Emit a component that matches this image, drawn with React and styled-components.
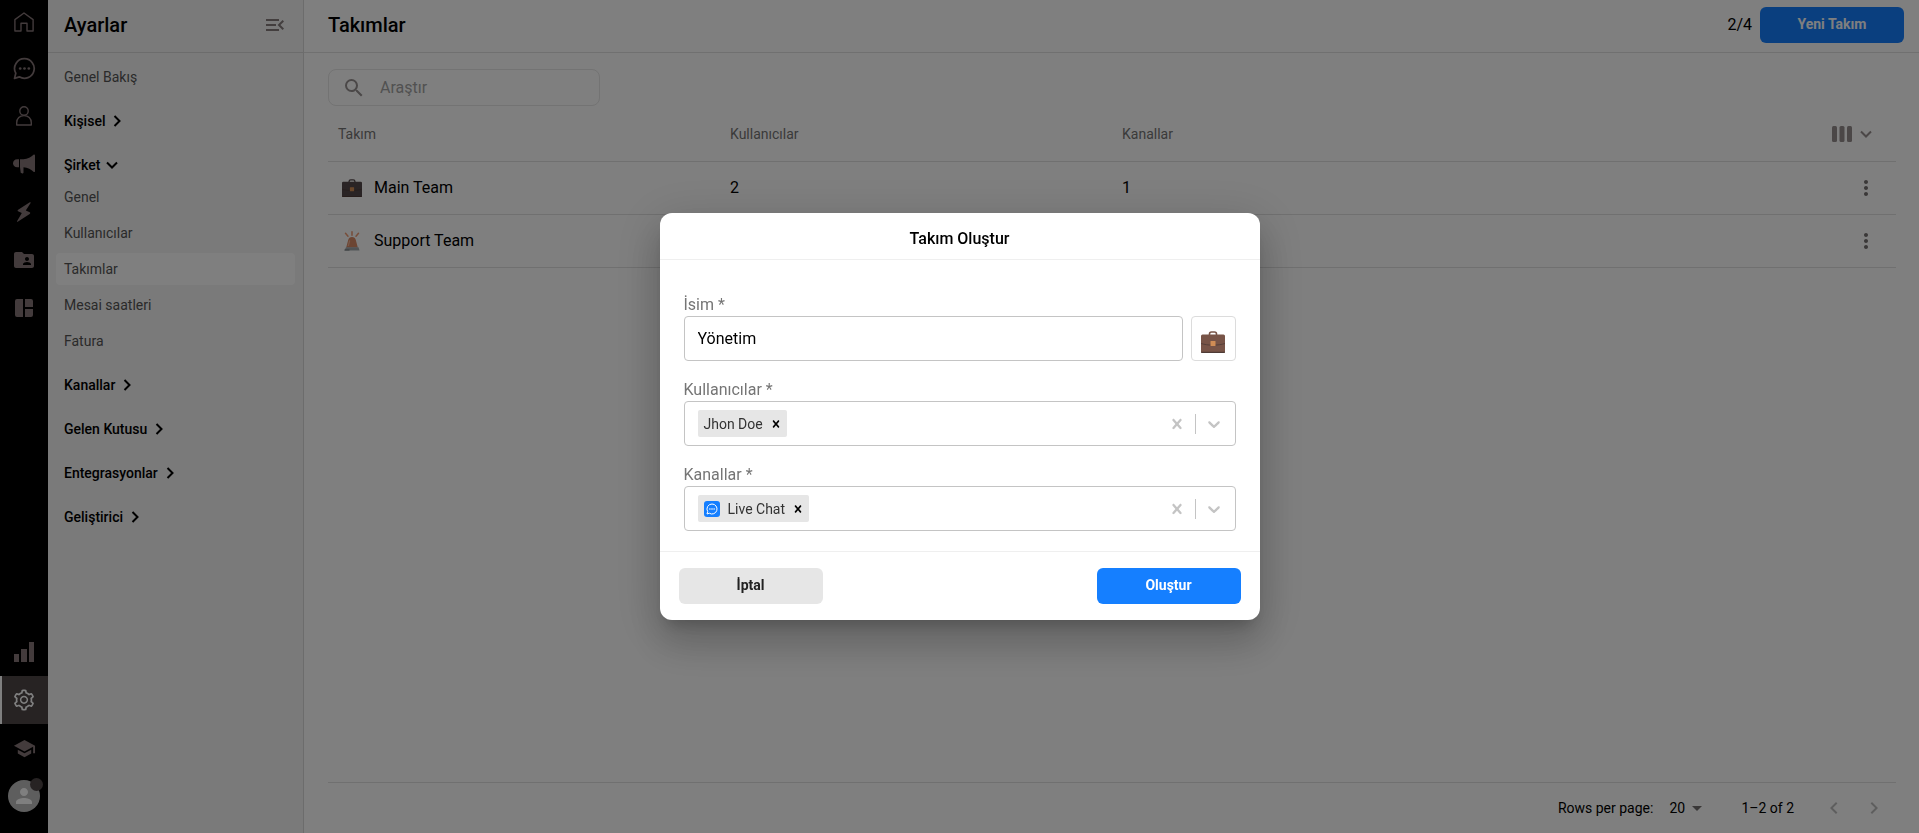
import React from "react";
import styled, { createGlobalStyle } from "styled-components";
import {
  MdFolderShared,
  MdMenuOpen,
  MdSchool,
  MdPerson,
  MdSearch,
  MdMoreVert,
  MdArrowDropDown,
  MdKeyboardArrowLeft,
  MdKeyboardArrowRight,
} from "react-icons/md";
import { AiOutlineSetting } from "react-icons/ai";

const GlobalStyle = createGlobalStyle`
  *, *::before, *::after { box-sizing: border-box; }
  body {
    margin: 0;
    font-family: Roboto, "Liberation Sans", sans-serif;
    font-size: 16px;
    line-height: 24px;
    color: #000;
    background: #fff;
  }
  button, input, select { font: inherit; color: inherit; }
  a { color: inherit; text-decoration: none; }
  svg { display: block; flex: none; }
`;

const Page = styled.div`
  display: flex;
  height: 100vh;
`;

/* Icon rail */
const Rail = styled.nav`
  width: 48px;
  flex: none;
  display: flex;
  flex-direction: column;
  justify-content: space-between;
  padding-bottom: 13px;
  background: #000;
`;

const RailGroup = styled.div`
  display: flex;
  flex-direction: column;
`;

const RailLink = styled.a`
  height: ${(p) => (p.$first ? "44px" : "48px")};
  display: flex;
  align-items: center;
  justify-content: center;
  color: ${(p) => (p.$active ? "#fff" : "#867678")};
  background: ${(p) => (p.$active ? "#4e4647" : "transparent")};
  box-shadow: ${(p) => (p.$active ? "inset 2px 0 0 #fff" : "none")};
`;

const Avatar = styled.span`
  position: relative;
  width: 32px;
  height: 32px;
  border-radius: 50%;
  display: flex;
  align-items: center;
  justify-content: center;
  background: #bdbdbd;
  color: #fff;
`;

const AvatarBadge = styled.span`
  position: absolute;
  top: -2px;
  right: -3px;
  width: 13px;
  height: 13px;
  border-radius: 50%;
  background: #4e4647;
`;

/* Settings menu */
const Sidebar = styled.aside`
  width: 256px;
  flex: none;
  background: #f4f4f4;
  border-right: 1px solid #d9d9d9;
`;

const SidebarHeader = styled.header`
  height: 53px;
  display: flex;
  align-items: center;
  justify-content: space-between;
  padding: 0 16px 2px;
  border-bottom: 1px solid #d9d9d9;
`;

const Title = styled.h1`
  margin: 0;
  font-size: 20px;
  font-weight: 500;
  line-height: 24px;
`;

const PlainButton = styled.button`
  display: flex;
  align-items: center;
  justify-content: center;
  padding: 0;
  border: 0;
  background: none;
  color: ${(p) => p.$color || "inherit"};
  width: ${(p) => p.$size || "auto"};
  height: ${(p) => p.$size || "auto"};
`;

const Menu = styled.nav`
  display: flex;
  flex-direction: column;
  padding: 6px 8px;
  font-size: 14px;
`;

const MenuLink = styled.a`
  display: flex;
  align-items: center;
  height: 32px;
  margin: 2px 0;
  padding: 0 8px;
  border-radius: 4px;
  color: #555;
  background: ${(p) => (p.$active ? "#fff" : "transparent")};
`;

const Section = styled.section`
  padding: 12px 0 ${(p) => (p.$open ? "0" : "4px")};
`;

const SectionButton = styled.button`
  display: flex;
  align-items: center;
  gap: 4px;
  height: 28px;
  padding: 0 8px;
  border: 0;
  background: none;
  font-weight: 500;
`;

const SectionItems = styled.div`
  display: flex;
  flex-direction: column;
`;

/* Main area */
const Main = styled.main`
  flex: 1;
  min-width: 0;
  display: flex;
  flex-direction: column;
`;

const MainHeader = styled.header`
  height: 53px;
  flex: none;
  display: flex;
  align-items: center;
  justify-content: space-between;
  padding: 0 15px 2px 24px;
  border-bottom: 1px solid #e0e0e0;
`;

const HeaderActions = styled.div`
  display: flex;
  align-items: center;
  gap: 8px;
`;

const Button = styled.button`
  width: 144px;
  height: 36px;
  padding: 0 8px 2px;
  border: 0;
  border-radius: 6px;
  font-size: 14px;
  font-weight: 700;
  color: ${(p) => (p.$primary ? "#fff" : "#222")};
  background: ${(p) => (p.$primary ? "#157fff" : "#e6e6e6")};
`;

const Content = styled.div`
  flex: 1;
  display: flex;
  flex-direction: column;
  padding: 16px 23px 0 24px;
`;

const SearchBox = styled.label`
  width: 272px;
  height: 37px;
  display: flex;
  align-items: center;
  gap: 14px;
  padding: 0 13px;
  border: 1px solid #e6e6e6;
  border-radius: 8px;
  color: #969090;
`;

const SearchInput = styled.input`
  flex: 1;
  min-width: 0;
  padding: 0;
  border: 0;
  outline: 0;
  background: none;
  &::placeholder { color: #a3a3a3; opacity: 1; }
`;

const Table = styled.table`
  width: 100%;
  table-layout: fixed;
  border-collapse: separate;
  border-spacing: 0;
`;

const Th = styled.th`
  height: 56px;
  padding: 0 10px;
  border-bottom: 1px solid #e0e0e0;
  font-size: 14px;
  font-weight: 400;
  text-align: left;
  color: #757575;
`;

const Td = styled.td`
  height: 53px;
  padding: 0 10px;
  border-bottom: 1px solid #e0e0e0;
`;

const TeamCell = styled.span`
  display: flex;
  align-items: center;
  gap: 8px;
`;

const TeamIcon = styled.span`
  width: 28px;
  display: flex;
  justify-content: center;
`;

const CellActions = styled.div`
  display: flex;
  justify-content: flex-end;
`;

const ColumnsButton = styled(PlainButton)`
  gap: 6px;
  padding-right: 12px;
`;

const TableFooter = styled.footer`
  height: 51px;
  margin-top: auto;
  display: flex;
  align-items: center;
  justify-content: flex-end;
  padding-right: 2px;
  border-top: 1px solid #e0e0e0;
  font-size: 14px;
`;

const RowsSelect = styled.div`
  position: relative;
  display: flex;
  align-items: center;
  margin: 0 32px 0 8px;
  & > svg { position: absolute; right: 0; pointer-events: none; color: #757070; }
`;

const RowsField = styled.select`
  appearance: none;
  width: 48px;
  height: 24px;
  padding: 0 24px 0 8px;
  border: 0;
  background: none;
`;

const Pager = styled.div`
  display: flex;
  margin-left: 20px;
`;

/* Dialog */
const Overlay = styled.div`
  position: fixed;
  inset: 0;
  display: flex;
  align-items: center;
  justify-content: center;
  background: rgba(0, 0, 0, 0.5);
`;

const Dialog = styled.form`
  width: 600px;
  max-width: 100%;
  border-radius: 12px;
  background: #fff;
  box-shadow: 0 11px 15px -7px rgba(0, 0, 0, 0.2),
    0 24px 38px 3px rgba(0, 0, 0, 0.14), 0 9px 46px 8px rgba(0, 0, 0, 0.12);
`;

const DialogTitle = styled.h2`
  margin: 0;
  padding: 14px 16px 8px;
  border-bottom: 1px solid #efefef;
  font-size: 16px;
  font-weight: 500;
  line-height: 24px;
  text-align: center;
`;

const DialogBody = styled.div`
  display: flex;
  flex-direction: column;
  gap: 16px;
  padding: 32px 24px 20px;
`;

const DialogFooter = styled.footer`
  display: flex;
  justify-content: space-between;
  padding: 16px 19px;
  border-top: 1px solid #efefef;
`;

const FieldLabel = styled.label`
  display: block;
  padding-top: 2px;
  line-height: 22px;
  color: #757575;
`;

const FieldRow = styled.div`
  display: flex;
  gap: 8px;
`;

const TextInput = styled.input`
  flex: 1;
  min-width: 0;
  height: 45px;
  padding: 0 13px;
  border: 1px solid #c4c4c4;
  border-radius: 4px;
  outline: 0;
  background: #fff;
`;

const EmojiButton = styled.button`
  width: 45px;
  height: 45px;
  display: flex;
  align-items: flex-end;
  justify-content: center;
  padding: 0 0 7px;
  border: 1px solid #dcdcdc;
  border-radius: 4px;
  background: #fff;
`;

const Control = styled.div`
  height: 45px;
  display: flex;
  align-items: center;
  padding: 0 11px 0 13px;
  border: 1px solid #c4c4c4;
  border-radius: 4px;
`;

const Chip = styled.span`
  height: 27px;
  display: flex;
  align-items: center;
  padding: 0 4px 0 6px;
  border-radius: 2px;
  background: #e6e6e6;
  color: #333;
  font-size: 14px;
  & > svg { margin-right: 8px; }
`;

const ChipRemove = styled.button`
  display: flex;
  margin-left: 6px;
  padding: 0;
  border: 0;
  background: none;
  color: #000;
`;

const ComboInput = styled.input`
  flex: 1;
  min-width: 0;
  padding: 0 4px;
  border: 0;
  outline: 0;
  background: none;
`;

const Separator = styled.span`
  width: 1px;
  height: 20px;
  margin: 0 8px;
  background: #c4c4c4;
`;

/* Icons */
const Chevron = ({ down }) => (
  <svg width="16" height="16" viewBox="0 0 16 16" fill="none" stroke="currentColor" strokeWidth="2">
    <path d={down ? "M3 5.5 8 10.5 13 5.5" : "M5.5 3 10.5 8 5.5 13"} />
  </svg>
);

const HomeIcon = () => (
  <svg width="20" height="20" viewBox="0 0 20 20" fill="none" stroke="currentColor" strokeWidth="1.4">
    <path d="M.9 7.6 10 1l9.100 6.600V19H13v-7.800H7V19H.9Z" strokeLinejoin="round" />
  </svg>
);

const ChatIcon = ({ size, stroke }) => (
  <svg width={size} height={size} viewBox="0 0 24 24" fill="none">
    <path
      d="M12 1.800A10.200 10.200 0 1 1 6.600 20.700L1.600 22.300 2.900 16.900A10.200 10.200 0 0 1 12 1.800Z"
      stroke="currentColor"
      strokeWidth={stroke}
      strokeLinejoin="round"
    />
    <g fill="currentColor">
      <circle cx="7.500" cy="12" r="1.400" />
      <circle cx="12" cy="12" r="1.400" />
      <circle cx="16.500" cy="12" r="1.400" />
    </g>
  </svg>
);

const PersonIcon = () => (
  <svg width="18" height="20" viewBox="0 0 18 20" fill="none" stroke="currentColor" strokeWidth="1.400">
    <circle cx="9" cy="5" r="4.200" />
    <path d="M1.700 19v-2.200C1.700 12.500 4.800 9.600 9 9.600s7.300 2.900 7.300 7.200V19Z" strokeLinejoin="round" />
  </svg>
);

const MegaphoneIcon = () => (
  <svg width="22" height="20" viewBox="0 0 22 20" fill="currentColor">
    <path d="M6 5.200v8H4.200C1.600 13.200 0 11.400 0 9.200s1.600-4 4.200-4Z" />
    <path d="M7 5.200h3.500C14.500 5 18.500 3 20.500.8c.6-.5 1.500-.3 1.500.6v15.800c0 .9-.9 1.100-1.500.6C18.500 15.600 14.500 13.600 10.500 13.300v5.200c0 1.300-2.500 1.300-2.800.1L7 13.200Z" />
  </svg>
);

const BoltIcon = () => (
  <svg width="16" height="20" viewBox="0 0 16 20" fill="currentColor">
    <path d="M13.800.3 2.200 7.700c-.6.400-.8 1.200-.2 1.600l3.800 1.700L1 19.200c-.2.500.2.800.7.500l12-7.800c.7-.5.7-1.300 0-1.600L9.800 8.600 14.600 1c.3-.5-.2-1-.8-.7Z" />
  </svg>
);

const LayoutIcon = () => (
  <svg width="18" height="18" viewBox="0 0 18 18" fill="currentColor">
    <path d="M2 0h6v18H2a2 2 0 0 1-2-2V2a2 2 0 0 1 2-2ZM10 0h6a2 2 0 0 1 2 2v6h-8ZM10 10h8v6a2 2 0 0 1-2 2h-6Z" />
  </svg>
);

const BarsIcon = () => (
  <svg width="20" height="20" viewBox="0 0 20 20" fill="currentColor">
    <rect x="0" y="12" width="5" height="8" />
    <rect x="7" y="7" width="6" height="13" />
    <rect x="15" y="0" width="5" height="20" />
  </svg>
);

const ColumnsIcon = () => (
  <svg width="20" height="16" viewBox="0 0 20 16" fill="currentColor">
    <rect width="5" height="16" rx="1.500" />
    <rect x="7.500" width="5" height="16" rx="1.500" />
    <rect x="15" width="5" height="16" rx="1.500" />
  </svg>
);

const CrossIcon = ({ size }) => (
  <svg width={size} height={size} viewBox="0 0 20 20" fill="currentColor">
    <path d="M14.348 14.849c-0.469 0.469-1.229 0.469-1.697 0l-2.651-3.030-2.651 3.029c-0.469 0.469-1.229 0.469-1.697 0-0.469-0.469-0.469-1.229 0-1.697l2.758-3.150-2.759-3.152c-0.469-0.469-0.469-1.228 0-1.697s1.228-0.469 1.697 0l2.652 3.031 2.651-3.031c0.469-0.469 1.228-0.469 1.697 0s0.469 1.229 0 1.697l-2.758 3.152 2.758 3.150c0.469 0.469 0.469 1.229 0 1.698z" />
  </svg>
);

const ArrowDownIcon = () => (
  <svg width="20" height="20" viewBox="0 0 20 20" fill="currentColor">
    <path d="M4.516 7.548c0.436-0.446 1.043-0.481 1.576 0l3.908 3.747 3.908-3.747c0.533-0.481 1.141-0.446 1.574 0 0.436 0.445 0.408 1.197 0 1.615-0.406 0.418-4.695 4.502-4.695 4.502-0.217 0.223-0.502 0.335-0.787 0.335s-0.570-0.112-0.789-0.335c0 0-4.287-4.084-4.695-4.502s-0.436-1.170 0-1.615z" />
  </svg>
);

const Briefcase = ({ width, height, body }) => (
  <svg width={width} height={height} viewBox="0 0 24 22" preserveAspectRatio="none">
    <path d="M8.500 4V3c0-1.200 1-2 2-2h3c1 0 2 .8 2 2v1" fill="none" stroke={body} strokeWidth="1.600" />
    <rect x="0" y="3.500" width="24" height="18.500" rx="1.500" fill={body} />
    <path d="M0 12.500c7 2.200 17 2.200 24 0" fill="none" stroke="#4e3b36" strokeWidth=".8" />
    <path d="M0 20.800h24V21a1 1 0 0 1-1 1H1a1 1 0 0 1-1-1Z" fill="#4e3b36" />
    <rect x="9.500" y="10" width="5" height="5" rx=".5" fill="#d18d55" />
  </svg>
);

const Siren = () => (
  <svg width="18" height="20" viewBox="0 0 18 20">
    <g stroke="#ef9a72" strokeWidth="1.500" strokeLinecap="round">
      <path d="M9 .8v3.400M2.500 2.300 5 5.200M15.500 2.300 13 5.200" />
    </g>
    <path d="M3.200 16.500 5.200 9a3.900 3.900 0 0 1 7.600 0l2 7.500Z" fill="#d98a66" />
    <path d="M5.300 15 6.700 9.500" stroke="#f3b597" strokeWidth="1.200" />
    <path d="M1.500 19.500 3 16.300h12.500l1 3.200Z" fill="#a3a9ad" />
    <path d="M1.500 18.500h5v1h-5Z" fill="#6d7478" />
  </svg>
);

const LiveChatLogo = () => (
  <svg width="16" height="16" viewBox="0 0 16 16">
    <rect width="16" height="16" rx="3" fill="#157fff" />
    <path d="M8 3A5 5 0 1 1 5.300 12.200L3 13l.7-2.400A5 5 0 0 1 8 3Z" fill="none" stroke="#fff" strokeWidth="1" />
    <g fill="#fff">
      <circle cx="5.900" cy="8" r=".8" />
      <circle cx="8" cy="8" r=".8" />
      <circle cx="10.100" cy="8" r=".8" />
    </g>
  </svg>
);

/* Data */
const sections = [
  { name: "Kişisel" },
  {
    name: "Şirket",
    active: "Takımlar",
    items: ["Genel", "Kullanıcılar", "Takımlar", "Mesai saatleri", "Fatura"],
  },
  { name: "Kanallar" },
  { name: "Gelen Kutusu" },
  { name: "Entegrasyonlar" },
  { name: "Geliştirici" },
];

const teams = [
  { name: "Main Team", users: 2, channels: 1, icon: <Briefcase width="20" height="18" body="#54484a" /> },
  { name: "Support Team", users: 1, channels: 1, icon: <Siren /> },
];

const railTop = [
  ["Ana sayfa", <HomeIcon />],
  ["Sohbet", <ChatIcon size={23} stroke={1.8} />],
  ["Kişiler", <PersonIcon />],
  ["Kampanyalar", <MegaphoneIcon />],
  ["Otomasyon", <BoltIcon />],
  ["Dosyalar", <MdFolderShared size={24} />],
  ["Panolar", <LayoutIcon />],
];

function MultiSelect({ id, label, value, icon }) {
  return (
    <div>
      <FieldLabel htmlFor={id}>{label}</FieldLabel>
      <Control>
        <Chip>
          {icon}
          {value}
          <ChipRemove type="button" aria-label={`${value} kaldır`}>
            <CrossIcon size={14} />
          </ChipRemove>
        </Chip>
        <ComboInput id={id} role="combobox" aria-expanded="false" />
        <PlainButton type="button" aria-label="Temizle" $color="#c4c4c4" $size="20px">
          <CrossIcon size={20} />
        </PlainButton>
        <Separator />
        <PlainButton type="button" aria-label="Aç" $color="#c4c4c4" $size="20px">
          <ArrowDownIcon />
        </PlainButton>
      </Control>
    </div>
  );
}

export default function App() {
  return (
    <>
      <GlobalStyle />
      <Page>
        <Rail>
          <RailGroup>
            {railTop.map(([label, icon], i) => (
              <RailLink key={label} href="#" aria-label={label} $first={i === 0}>
                {icon}
              </RailLink>
            ))}
          </RailGroup>
          <RailGroup>
            <RailLink href="#" aria-label="Raporlar">
              <BarsIcon />
            </RailLink>
            <RailLink href="#" aria-label="Ayarlar" $active>
              <AiOutlineSetting size={24} />
            </RailLink>
            <RailLink href="#" aria-label="Akademi">
              <MdSchool size={23} />
            </RailLink>
            <RailLink href="#" aria-label="Profil">
              <Avatar>
                <MdPerson size={24} />
                <AvatarBadge />
              </Avatar>
            </RailLink>
          </RailGroup>
        </Rail>

        <Sidebar>
          <SidebarHeader>
            <Title>Ayarlar</Title>
            <PlainButton aria-label="Menüyü daralt" $color="#867c7c" $size="24px">
              <MdMenuOpen size={24} />
            </PlainButton>
          </SidebarHeader>
          <Menu>
            <MenuLink href="#">Genel Bakış</MenuLink>
            {sections.map((s) => (
              <Section key={s.name} $open={!!s.items}>
                <SectionButton aria-expanded={!!s.items}>
                  {s.name}
                  <Chevron down={!!s.items} />
                </SectionButton>
                {s.items && (
                  <SectionItems>
                    {s.items.map((item) => (
                      <MenuLink key={item} href="#" $active={item === s.active}>
                        {item}
                      </MenuLink>
                    ))}
                  </SectionItems>
                )}
              </Section>
            ))}
          </Menu>
        </Sidebar>

        <Main>
          <MainHeader>
            <Title>Takımlar</Title>
            <HeaderActions>
              <span>2/4</span>
              <Button $primary>Yeni Takım</Button>
            </HeaderActions>
          </MainHeader>
          <Content>
            <SearchBox>
              <MdSearch size={24} />
              <SearchInput type="text" placeholder="Araştır" aria-label="Araştır" />
            </SearchBox>
            <Table>
              <thead>
                <tr>
                  <Th>Takım</Th>
                  <Th>Kullanıcılar</Th>
                  <Th>Kanallar</Th>
                  <Th>
                    <CellActions>
                      <ColumnsButton aria-label="Sütunlar" $color="#968e8e">
                        <ColumnsIcon />
                        <Chevron down />
                      </ColumnsButton>
                    </CellActions>
                  </Th>
                </tr>
              </thead>
              <tbody>
                {teams.map((t) => (
                  <tr key={t.name}>
                    <Td>
                      <TeamCell>
                        <TeamIcon>{t.icon}</TeamIcon>
                        {t.name}
                      </TeamCell>
                    </Td>
                    <Td>{t.users}</Td>
                    <Td>{t.channels}</Td>
                    <Td>
                      <CellActions>
                        <PlainButton aria-label="Seçenekler" $color="#757070" $size="40px">
                          <MdMoreVert size={24} />
                        </PlainButton>
                      </CellActions>
                    </Td>
                  </tr>
                ))}
              </tbody>
            </Table>
            <TableFooter>
              <label htmlFor="rows">Rows per page:</label>
              <RowsSelect>
                <RowsField id="rows" defaultValue="20">
                  <option>20</option>
                </RowsField>
                <MdArrowDropDown size={24} />
              </RowsSelect>
              <span>1–2 of 2</span>
              <Pager>
                <PlainButton aria-label="Önceki sayfa" $color="#bdbdbd" $size="40px" disabled>
                  <MdKeyboardArrowLeft size={24} />
                </PlainButton>
                <PlainButton aria-label="Sonraki sayfa" $color="#bdbdbd" $size="40px" disabled>
                  <MdKeyboardArrowRight size={24} />
                </PlainButton>
              </Pager>
            </TableFooter>
          </Content>
        </Main>
      </Page>

      <Overlay>
        <Dialog role="dialog" aria-labelledby="dialog-title">
          <DialogTitle id="dialog-title">Takım Oluştur</DialogTitle>
          <DialogBody>
            <div>
              <FieldLabel htmlFor="team-name">İsim *</FieldLabel>
              <FieldRow>
                <TextInput id="team-name" type="text" defaultValue="Yönetim" />
                <EmojiButton type="button" aria-label="Simge seç">
                  <Briefcase width="24" height="22" body="#785447" />
                </EmojiButton>
              </FieldRow>
            </div>
            <MultiSelect id="team-users" label="Kullanıcılar *" value="Jhon Doe" />
            <MultiSelect id="team-channels" label="Kanallar *" value="Live Chat" icon={<LiveChatLogo />} />
          </DialogBody>
          <DialogFooter>
            <Button type="button">İptal</Button>
            <Button type="button" $primary>
              Oluştur
            </Button>
          </DialogFooter>
        </Dialog>
      </Overlay>
    </>
  );
}
